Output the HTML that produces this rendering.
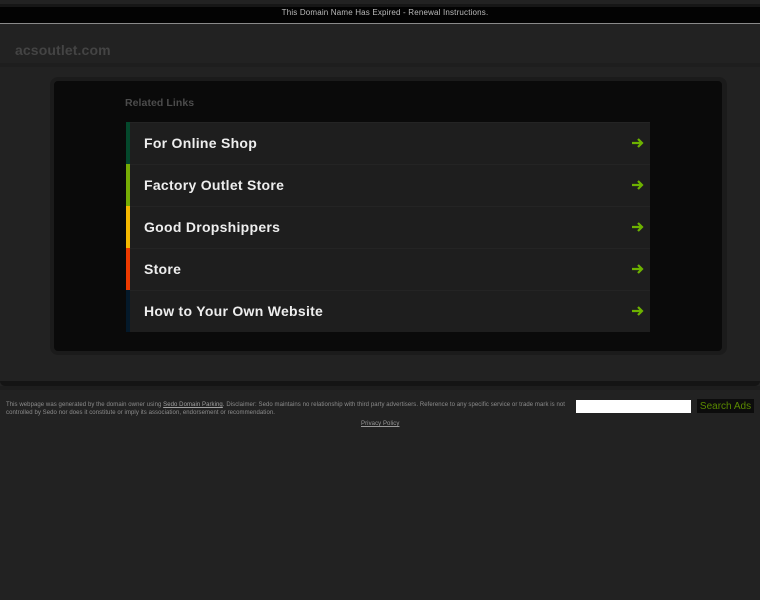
<!DOCTYPE html>
<html lang="en">
<head>
<meta charset="utf-8">
<title>acsoutlet.com</title>
<style>
html,body{margin:0;padding:0;background:#222;width:760px;height:600px;overflow:hidden;font-family:"Liberation Sans",sans-serif}
.a{position:absolute}
a{color:inherit}
.row{position:absolute;left:126px;width:524px;height:42px;background:#1e1e1e;box-shadow:inset 0 1px 0 #242424}
.bar{position:absolute;left:0;top:0;width:4px;height:42px}
.lbl{position:absolute;left:18px;top:12px;font-size:14px;line-height:18px;font-weight:bold;color:#eee;letter-spacing:.28px;white-space:nowrap}
.row svg{position:absolute;left:506px;top:15px}
</style>
</head>
<body>
<div class="a" style="left:0;top:0;width:760px;height:4px;background:#222"></div>
<div class="a" style="left:0;top:4px;width:760px;height:3px;background:#161616"></div>
<div class="a" style="left:0;top:7px;width:760px;height:16px;background:#030303"></div>
<div class="a" style="left:0;top:23px;width:760px;height:1px;background:#8a8a8a"></div>
<div class="a" style="left:0;top:7px;width:770px;text-align:center;font-size:8px;line-height:11px;color:#bbb;letter-spacing:.17px;white-space:nowrap">This Domain Name Has Expired - Renewal Instructions.</div>

<div class="a" style="left:15px;top:42px;font-size:14px;line-height:17px;font-weight:bold;color:#444;letter-spacing:.12px">acsoutlet.com</div>
<div class="a" style="left:0;top:63px;width:760px;height:4px;background:#1e1e1e"></div>

<div class="a" style="left:50px;top:77px;width:677px;height:278px;background:#1b1b1b;border-radius:8px"></div>
<div class="a" style="left:54px;top:81px;width:668px;height:270px;background:#0a0a0a;border-radius:4px"></div>

<div class="a" style="left:125px;top:97px;font-size:10.5px;line-height:13px;font-weight:bold;color:#4c4c4c;letter-spacing:.07px">Related Links</div>

<div class="row" style="top:122px"><div class="bar" style="background:#04482c"></div><div class="lbl">For Online Shop</div>
<svg width="12" height="12" viewBox="0 0 12 12"><path d="M0 6H9.500M6 2L10 6L6 10" fill="none" stroke="#6db200" stroke-width="2.200"/></svg></div>
<div class="row" style="top:164px"><div class="bar" style="background:#76ac05"></div><div class="lbl">Factory Outlet Store</div>
<svg width="12" height="12" viewBox="0 0 12 12"><path d="M0 6H9.500M6 2L10 6L6 10" fill="none" stroke="#6db200" stroke-width="2.200"/></svg></div>
<div class="row" style="top:206px"><div class="bar" style="background:#f6b800"></div><div class="lbl">Good Dropshippers</div>
<svg width="12" height="12" viewBox="0 0 12 12"><path d="M0 6H9.500M6 2L10 6L6 10" fill="none" stroke="#6db200" stroke-width="2.200"/></svg></div>
<div class="row" style="top:248px"><div class="bar" style="background:#ee3a00"></div><div class="lbl">Store</div>
<svg width="12" height="12" viewBox="0 0 12 12"><path d="M0 6H9.500M6 2L10 6L6 10" fill="none" stroke="#6db200" stroke-width="2.200"/></svg></div>
<div class="row" style="top:290px"><div class="bar" style="background:#04192a"></div><div class="lbl">How to Your Own Website</div>
<svg width="12" height="12" viewBox="0 0 12 12"><path d="M0 6H9.500M6 2L10 6L6 10" fill="none" stroke="#6db200" stroke-width="2.200"/></svg></div>

<div class="a" style="left:0;top:381px;width:760px;height:5px;background:#141414;border-radius:0 0 8px 8px"></div>
<div class="a" style="left:0;top:386px;width:760px;height:4px;background:#1d1d1d"></div>

<div class="a" style="left:6px;top:401px;width:565px;font-size:6px;line-height:8px;color:#8c8c8c;letter-spacing:.07px;white-space:nowrap">This webpage was generated by the domain owner using <a href="#" style="color:#a0a0a0">Sedo Domain Parking</a>. Disclaimer: Sedo maintains no relationship with third party advertisers. Reference to any specific service or trade mark is not<br>controlled by Sedo nor does it constitute or imply its association, endorsement or recommendation.</div>
<div class="a" style="left:361px;top:420px;font-size:6px;line-height:8px;color:#999;letter-spacing:.08px;text-decoration:underline;white-space:nowrap">Privacy Policy</div>

<div class="a" style="left:576px;top:400px;width:115px;height:13px;background:#fff"></div>
<div class="a" style="left:697px;top:399px;width:57px;height:14px;background:#0c0c0c;color:#5a8a00;font-size:10px;line-height:15px;text-align:center;letter-spacing:0;white-space:nowrap">Search Ads</div>
</body>
</html>
